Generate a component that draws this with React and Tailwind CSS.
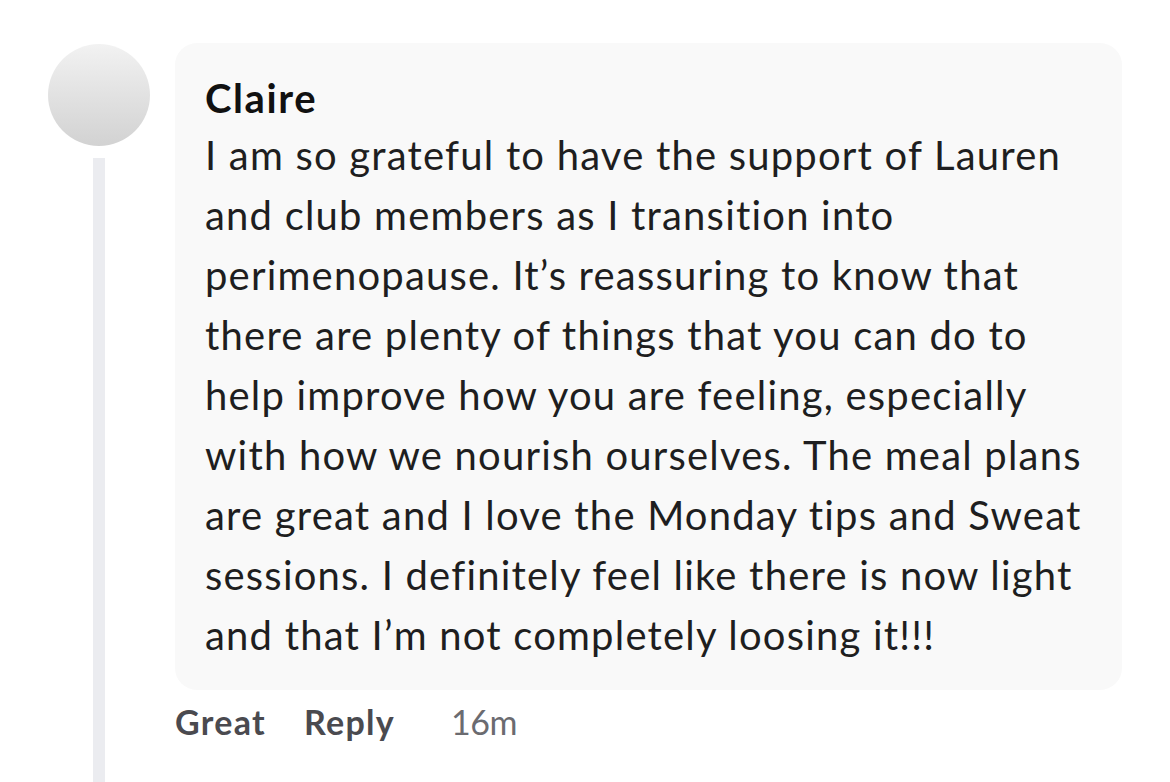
import React from "react";

const lines = [
  "I am so grateful to have the support of Lauren",
  "and club members as I transition into",
  "perimenopause. It’s reassuring to know that",
  "there are plenty of things that you can do to",
  "help improve how you are feeling, especially",
  "with how we nourish ourselves. The meal plans",
  "are great and I love the Monday tips and Sweat",
  "sessions. I definitely feel like there is now light",
  "and that I’m not completely loosing it!!!",
];

export default function App() {
  return (
    <div
      className="h-screen w-full overflow-hidden bg-white flex pl-[48px] pt-[43px] [font-variant-ligatures:none]"
      style={{ fontFamily: "Lato, 'Noto Sans', sans-serif" }}
    >
      {/* Avatar + thread line */}
      <div className="flex flex-col items-center w-[102px] shrink-0 pt-[1px]">
        <div className="w-[102px] h-[102px] rounded-full bg-gradient-to-b from-[#f2f2f2] to-[#d2d2d2]" />
        <div className="w-[12px] flex-1 mt-[12px] bg-[#ebecf0]" />
      </div>

      <div className="ml-[25px] w-[947px]">
        <div className="bg-[#f9f9f9] rounded-[22px] h-[647px] pl-[30px] pt-[28px]">
          <div className="text-[40px] leading-[54px] font-bold text-[#111] tracking-[1.6px]">Claire</div>
          <p className="text-[40px] leading-[60px] text-[#1e1e20] whitespace-nowrap tracking-[1.2px]">
            {lines.map((l, i) => (
              <React.Fragment key={i}>
                {l}
                {i < lines.length - 1 && <br />}
              </React.Fragment>
            ))}
          </p>
        </div>
        <div className="flex items-center text-[34px] mt-[10px] leading-[44px] tracking-[1.3px]">
          <span className="font-bold text-[#4a4a4f]">Great</span>
          <span className="font-bold text-[#4a4a4f] ml-[38px]">Reply</span>
          <span className="text-[#6b6b70] ml-[56px] tracking-[-0.5px]">16m</span>
        </div>
      </div>
    </div>
  );
}
